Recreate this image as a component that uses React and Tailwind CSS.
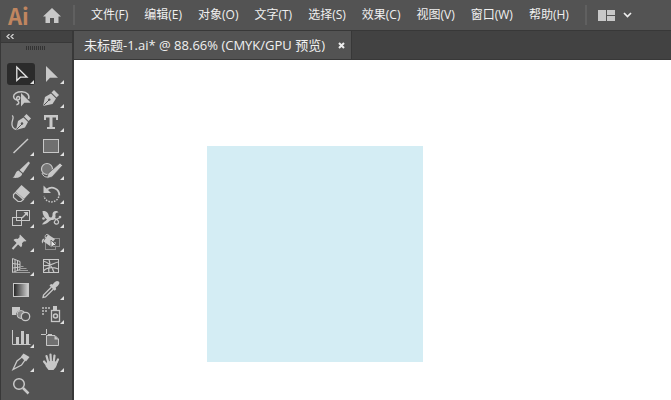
import React from "react";

const menus = [
  "文件(F)",
  "编辑(E)",
  "对象(O)",
  "文字(T)",
  "选择(S)",
  "效果(C)",
  "视图(V)",
  "窗口(W)",
  "帮助(H)",
];

const line = { fill: "none", stroke: "#c8c8c8", strokeWidth: 1.5 };
const thin = { fill: "none", stroke: "#c8c8c8", strokeWidth: 1 };

// every icon is drawn in a 30x24 box
const tools = [
  {
    name: "选择工具",
    more: true,
    active: true,
    icon: <path d="M10.8 5v13.5l3.6-3.3h6.6z" {...line} stroke="#e4e4e4" strokeWidth="1.3" />,
  },
  {
    name: "直接选择工具",
    more: true,
    icon: <path d="M10 4v16l4-4.3h8z" />,
  },
  {
    name: "套索工具",
    icon: (
      <>
        <path d="M22.5 13c1.5-4-1.500-7-6.500-7.200-5-.2-8.600 2-8.400 5 .1 2.400 2.600 3.400 4.600 3 2-.5 2-3.200 0-3.200-2.200 0-1.800 3.400-.2 4.600 1.400 1.200 1 3-1.600 3.500" {...line} />
        <path d="M15 7v13.500l3.300-3.800h6.500z" />
      </>
    ),
  },
  {
    name: "钢笔工具",
    more: true,
    icon: (
      <>
        <path d="M7 20l2-9 6-3.500 5 5-3.500 5.500z" />
        <path d="M15.500 6.500l2.500-2.500 5 5-2.500 2.500z" />
        <path d="M7.500 19.500l5.500-5.500" stroke="#535353" strokeWidth="1" />
        <circle cx="13.3" cy="13.6" r="1.2" fill="#535353" />
      </>
    ),
  },
  {
    name: "曲率工具",
    icon: (
      <>
        <path d="M6 5.500c2.500 1 .5 4 0 7-.5 3.500 1 6.500 4.500 7" {...thin} strokeWidth="1.300" />
        <path d="M10 20l2-9 5.500-3.500 4.500 4.500-3 5.500z" />
        <path d="M18 6.500l2.500-2.500 4.500 4.500-2.500 2.500z" />
        <path d="M10.500 19.500l5.500-5.500" stroke="#535353" strokeWidth="1" />
        <circle cx="16" cy="13.5" r="1.2" fill="#535353" />
      </>
    ),
  },
  {
    name: "文字工具",
    more: true,
    icon: <path d="M8 5h14v5h-2v-2.500h-3.500v9.500h2.500v2h-8v-2h2.500v-9.500h-3.500v2.500h-2z" />,
  },
  {
    name: "直线段工具",
    more: true,
    icon: <path d="M7.500 19l14.500-14" {...line} />,
  },
  {
    name: "矩形工具",
    more: true,
    icon: <rect x="7.500" y="5.500" width="15" height="13" fill="#707070" stroke="#c8c8c8" />,
  },
  {
    name: "画笔工具",
    more: true,
    icon: (
      <>
        <path d="M22.500 3.500l1.500 1.500-7 10-3.500-3z" />
        <path d="M12.500 12.500l3.700 3.200c-.7 3.300-5 5-9.700 3.800 3-.8 2.500-6.500 6-7z" />
      </>
    ),
  },
  {
    name: "Shaper 工具",
    more: true,
    icon: (
      <>
        <circle cx="11" cy="11" r="5.500" fill="#777" stroke="#c8c8c8" strokeWidth="1.200" />
        <path d="M24 5l2.500 2.500-10.500 11.500-5 1.500 1-5z" stroke="#535353" strokeWidth=".7" />
        <path d="M6 15c1 3 3 4.500 6 4" {...thin} />
      </>
    ),
  },
  {
    name: "橡皮擦工具",
    more: true,
    icon: (
      <>
        <path d="M15.5 3l8.500 7.500-6 6.500-8.500-7.500z" />
        <path d="M9.500 10.500l8 7-2.500 2h-3l-4.500-4v-3z" {...thin} strokeWidth="1.200" />
      </>
    ),
  },
  {
    name: "旋转工具",
    more: true,
    icon: (
      <>
        <path d="M11 7.500c5-4 12.500-.8 12.300 6" {...line} strokeWidth="1.800" />
        <path d="M22.800 14.500c-2 7.500-13.500 7-14.800-.5" {...line} strokeDasharray="1.500 1.300" />
        <path d="M7.500 3.500v7.500h7.500z" />
      </>
    ),
  },
  {
    name: "比例缩放工具",
    more: true,
    icon: (
      <>
        <rect x="10.500" y="4.500" width="13" height="10" {...thin} />
        <rect x="6.500" y="11.500" width="9" height="8" {...thin} />
        <path d="M16 12l5-5" {...line} />
        <path d="M17.500 6h4.500v4.500z" />
      </>
    ),
  },
  {
    name: "宽度工具",
    more: true,
    icon: (
      <>
        <path d="M6.500 5c4.500-.5 6 2.500 6.500 5.500 1.500 2 3.500 1 3.500-1.500-.500-3.500 4-5.500 6-2.500-2.500-.500-3.500 1-3 3 .5 3.500-2.500 5-5 4.500-2 2.500-5 4.500-8.500 4.500 1-2 3.500-3.500 5-5-2.500-2-4.500-4.500-4.500-8.500z" />
        <path d="M13 14.500c3-2 6-2.500 8.500-.5 2 1.800 1 4.500-1.500 4-2.500-.5-2.500-3.500 2-5.500l2.500-1" {...thin} strokeWidth="1.300" />
        <circle cx="7.500" cy="12.500" r="1.300" />
        <circle cx="24" cy="11" r="1.300" />
      </>
    ),
  },
  {
    name: "操控变形工具",
    more: true,
    icon: (
      <>
        <path d="M14 4.500l6.500 6.500-1.500.5-1-.3-2 2c.5 1.800 0 3-1 4l-7.500-7.200c1-1 2.500-1.500 4.200-1l2-2-.3-1z" />
        <path d="M12 13l-5.500 6" {...line} strokeWidth="2" />
      </>
    ),
  },
  {
    name: "形状生成器工具",
    more: true,
    icon: (
      <>
        <rect x="14.500" y="8.500" width="9" height="8" {...thin} stroke="#909090" />
        <rect x="9.500" y="12.500" width="10" height="7" {...thin} stroke="#909090" />
        <path d="M12 4.500l7 4.500-5 7-6.500-4.500z" />
        <path d="M9.500 8c-1.500-3.500 2.500-5 3.500-2" {...thin} />
        <path d="M8.500 8.500c-2.500 0-3.500 3-2 5z" />
        <path d="M15 10l5.500 5.500h-3l-2.500 2z" fill="#e6e6e6" stroke="#535353" strokeWidth=".8" />
      </>
    ),
  },
  {
    name: "透视网格工具",
    more: true,
    icon: (
      <>
        <path d="M6.500 4.500v14l7.500-3v-8zM6.500 9.500l7.500 1M6.500 14l7.500-1M9 5.500v12M11.500 6.500v10" {...thin} />
        <path d="M14.500 12.500h3M14.500 14.500h6M12 16.500h10M8 18.500h16" {...thin} stroke="#a0a0a0" />
      </>
    ),
  },
  {
    name: "网格工具",
    icon: (
      <>
        <rect x="7.500" y="5.500" width="15" height="13" {...thin} />
        <path d="M13 5.500c2.500 5-1.500 8 0 13M22.500 8c-4 0-7 4.500-15 3.500M7.500 17c4-4.500 9-4 15-2M7.500 7c4 1 9 5 10.500 11.500" {...thin} strokeWidth="1.200" />
      </>
    ),
  },
  {
    name: "渐变工具",
    icon: (
      <>
        <defs>
          <linearGradient id="toolGradient">
            <stop offset="0" stopColor="#222" />
            <stop offset="1" stopColor="#d4d4d4" />
          </linearGradient>
        </defs>
        <rect x="7.500" y="5.500" width="15" height="13" fill="url(#toolGradient)" stroke="#c8c8c8" />
      </>
    ),
  },
  {
    name: "吸管工具",
    more: true,
    icon: (
      <>
        <path d="M15.500 9l-8 8-.5 2.500 2.500-.5 8-8" {...thin} strokeWidth="1.300" />
        <path d="M13.500 7.500l1.500-1.500 1.700.5c2-3 4.300-4.500 6-3s0 4-3 6l.5 1.700-1.500 1.500z" />
      </>
    ),
  },
  {
    name: "混合工具",
    icon: (
      <>
        <path d="M6 5h8v3.500a5 5 0 0 0-4 4.500h-4z" />
        <circle cx="15" cy="12.500" r="4" fill="#858585" stroke="#c8c8c8" />
        <circle cx="19.500" cy="14.500" r="4.200" fill="#535353" stroke="#c8c8c8" strokeWidth="1.300" />
      </>
    ),
  },
  {
    name: "符号喷枪工具",
    more: true,
    icon: (
      <>
        <path d="M6 5h2v2h-2zM9 5h2v2h-2zM12 5h2v2h-2zM6 8h2v2h-2zM9 8h2v2h-2zM6 11h2v2h-2z" fill="#a5a5a5" />
        <path d="M17 4h4v4h-4z" />
        <rect x="15.500" y="8.500" width="8" height="11" {...thin} strokeWidth="1.300" />
        <circle cx="19.500" cy="14" r="2" {...line} />
      </>
    ),
  },
  {
    name: "柱形图工具",
    more: true,
    icon: (
      <>
        <path d="M6.500 4v14.500h18" {...thin} />
        <path d="M10 11h3v7h-3zM15 5h3v13h-3zM20 8h3v10h-3z" />
      </>
    ),
  },
  {
    name: "画板工具",
    icon: (
      <>
        <path d="M10.500 9.500h8.500l3.500 3.500v6.500h-12z" fill="#707070" stroke="#c8c8c8" />
        <path d="M10.500 3v5M5 8.500h5M12 8.500h4" {...thin} />
        <path d="M18.500 9.500v4h4z" />
      </>
    ),
  },
  {
    name: "切片工具",
    more: true,
    icon: (
      <>
        <path d="M7 19.500l4-8.500 5-4 3 3-3.500 5z" {...thin} strokeWidth="1.300" />
        <path d="M15 6.500l2.500-3 6 3.500-3.500 4.500z" />
      </>
    ),
  },
  {
    name: "抓手工具",
    more: true,
    icon: (
      <>
        <path d="M11 12c2-1 7-1.500 10.500 0l-1.500 5-2.500 3h-5l-3-4z" />
        <path d="M8 11.500l4 5M10.500 6l2 7M14.500 4.500l.5 9M18.500 5.500l-1 8M22 9.500l-3 6" {...line} strokeWidth="2.200" strokeLinecap="round" />
      </>
    ),
  },
  {
    name: "缩放工具",
    icon: (
      <>
        <circle cx="13" cy="10" r="5.300" {...line} />
        <path d="M17 14l5.500 5.500" {...line} strokeWidth="2.500" />
      </>
    ),
  },
];

function Tool({ tool }) {
  return (
    <button
      type="button"
      aria-label={tool.name}
      className={
        tool.active
          ? "h-6 bg-[#2b2b2b] bg-clip-padding border border-transparent rounded-sm flex items-center justify-center"
          : "h-6 flex items-center justify-center"
      }
    >
      <svg viewBox="0 0 30 24" className="w-[30px] h-6 shrink-0" fill="#c8c8c8">
        {tool.icon}
        {tool.more && <path d="M28 18v4h-4z" fill="#e0e0e0" />}
      </svg>
    </button>
  );
}

function MenuBar() {
  return (
    <header className="h-[31px] flex items-center bg-[#535353] border-b border-[#383838] shrink-0">
      <span className="w-9 pl-2 text-[22px] leading-7 font-['Noto_Sans_CJK_SC',sans-serif] font-bold text-[#c08660]">Ai</span>
      <button type="button" aria-label="主页" className="ml-[7px]">
        <svg viewBox="0 0 18 17" className="w-[18px] h-[17px]" fill="#c8c8c8">
          <path d="M9 1l9 8.500h-2.500v6.500h-4.500v-5h-4v5h-4.500v-6.500h-2.500z" />
        </svg>
      </button>
      <span className="w-0.5 h-5 ml-3 bg-[#606060]" />
      <nav className="ml-4 flex gap-4">
        {menus.map((menu) => (
          <button key={menu} type="button" className="text-xs leading-4 whitespace-nowrap">
            {menu}
          </button>
        ))}
      </nav>
      <span className="w-0.5 h-5 ml-4 bg-[#606060]" />
      <button type="button" aria-label="排列文档" className="ml-[11px] flex items-center gap-2">
        <svg viewBox="0 0 17 11" className="w-[17px] h-[11px]" fill="#c8c8c8">
          <path d="M0 0h8v11h-8zM9 0h8v5h-8zM9 6h8v5h-8z" />
        </svg>
        <svg viewBox="0 0 9 6" className="w-[9px] h-1.5" fill="none" stroke="#eee" strokeWidth="1.700">
          <path d="M1 1l3.500 3.500 3.500-3.500" />
        </svg>
      </button>
    </header>
  );
}

function ToolPanel() {
  return (
    <aside className="w-[74px] shrink-0 bg-[#535353] border-l border-r-2 border-[#383838]">
      <div className="h-3 flex items-center bg-[#424242] border-b border-[#383838]">
        <button type="button" aria-label="折叠面板" className="ml-[5px]">
          <svg viewBox="0 0 8 5" className="w-2 h-[5px]" fill="none" stroke="#d0d0d0" strokeWidth="1.300">
            <path d="M3.500 0l-2.500 2.500 2.500 2.500M7.500 0l-2.500 2.500 2.500 2.500" />
          </svg>
        </button>
      </div>
      <svg viewBox="0 0 20 4" className="w-5 h-1 mt-[3px] ml-[25px]" stroke="#333">
        <path d="M.5 0v4M2.500 0v4M4.500 0v4M6.500 0v4M8.500 0v4M10.500 0v4M12.500 0v4M14.500 0v4M16.500 0v4M18.500 0v4" />
      </svg>
      <div className="mt-3 ml-[5px] grid grid-cols-[30px_30px]">
        {tools.map((tool) => (
          <Tool key={tool.name} tool={tool} />
        ))}
      </div>
    </aside>
  );
}

function Document() {
  return (
    <main className="flex-1 min-w-0 flex flex-col">
      <div className="h-[29px] flex shrink-0 bg-[#424242] border-b border-[#383838]">
        <div className="flex items-center pl-[10px] pr-[6px] bg-[#535353] border-r border-[#383838]">
          <span className="text-[13px] leading-4 whitespace-nowrap">未标题-1.ai* @ 88.66% (CMYK/GPU 预览)</span>
          <button type="button" aria-label="关闭" className="ml-[13px]">
            <svg viewBox="0 0 7 7" className="w-[7px] h-[7px]" stroke="#eee" strokeWidth="2">
              <path d="M1 1l5 5M6 1l-5 5" />
            </svg>
          </button>
        </div>
      </div>
      <div className="flex-1 bg-white pt-[86px] pl-[133px]">
        <div className="w-[216px] h-[216px] bg-[#d4edf4]" />
      </div>
    </main>
  );
}

export default function App() {
  return (
    <div className="h-screen flex flex-col overflow-hidden font-['Open_Sans','Noto_Sans_CJK_SC',sans-serif] text-[#f0f0f0]">
      <MenuBar />
      <div className="flex-1 min-h-0 flex">
        <ToolPanel />
        <Document />
      </div>
    </div>
  );
}
